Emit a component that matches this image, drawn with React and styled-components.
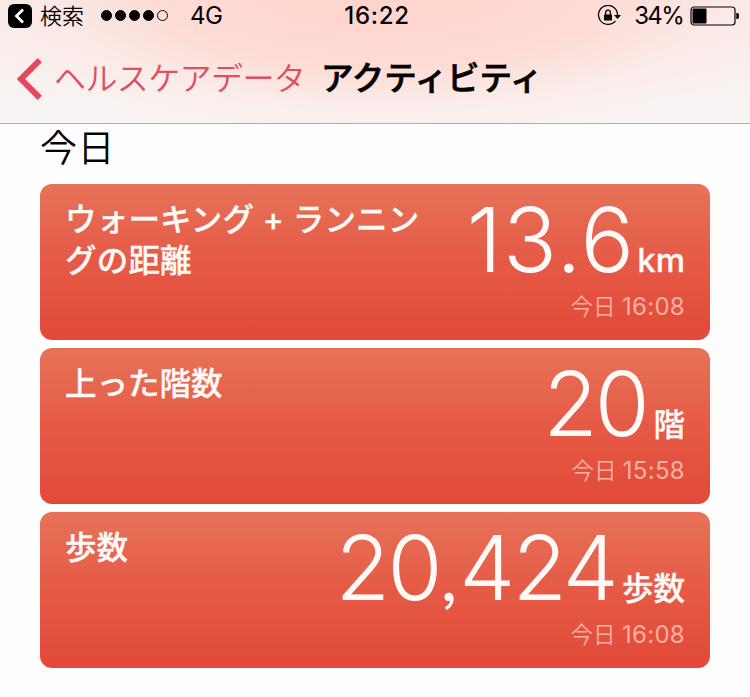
import React from 'react';
import styled, { createGlobalStyle } from 'styled-components';

const GlobalStyle = createGlobalStyle`
  * { box-sizing: border-box; }
  body {
    margin: 0;
    background: #fefefe;
    font-family: Inter, "Noto Sans CJK JP", sans-serif;
    color: #050203;
  }
`;

const Screen = styled.div`
  width: 750px;
  height: 697px;
  overflow: hidden;
  background: #fefefe;
`;

const Header = styled.header`
  height: 124px;
  border-bottom: 1px solid #b4acad;
  background:
    radial-gradient(ellipse 450px 155px at 385px -10px, rgba(255, 213, 205, 1) 15%, rgba(254, 217, 210, 0.85) 50%, rgba(252, 230, 226, 0.45) 76%, rgba(249, 245, 244, 0) 100%),
    linear-gradient(#faeae7, #f8f4f3 85%);
`;

const StatusBar = styled.div`
  display: grid;
  grid-template-columns: 1fr auto 1fr;
  align-items: center;
  height: 31px;
  padding: 0 10px 0 8px;
`;

const StatusGroup = styled.div`
  display: flex;
  align-items: center;
  justify-content: ${(p) => (p.$end ? 'flex-end' : 'flex-start')};
`;

const AppBack = styled.span`
  width: 24px;
  height: 24px;
  display: flex;
  border-radius: 6px;
  background: #000;
`;

const StatusText = styled.span`
  font-size: ${(p) => p.$size || 24}px;
  font-weight: ${(p) => p.$weight || 400};
  letter-spacing: ${(p) => p.$track || 0}px;
  margin-left: ${(p) => p.$left || 0}px;
  line-height: 30px;
  white-space: nowrap;
`;

const Signal = styled.span`
  display: flex;
  gap: 3px;
  margin-left: 17px;
`;

const Dot = styled.i`
  width: 11px;
  height: 11px;
  border-radius: 50%;
  border: 1px solid #000;
  background: ${(p) => (p.$on ? '#000' : 'transparent')};
`;

const LockIcon = styled.svg`
  width: 24px;
  height: 22px;
  margin-right: 13px;
`;

const Battery = styled.svg`
  width: 50px;
  height: 20px;
  margin-left: 7px;
`;

const NavBar = styled.nav`
  display: flex;
  align-items: center;
  height: 92px;
  padding: 3px 0 0 17px;
`;

const Chevron = styled.svg`
  width: 26px;
  height: 42px;
`;

const BackLabel = styled.span`
  margin-left: 11px;
  width: 267px;
  color: #dc5060;
  font-size: 32px;
  font-weight: 350;
  letter-spacing: -0.6px;
  line-height: 44px;
  white-space: nowrap;
`;

const NavTitle = styled.h1`
  margin: 0;
  font-size: 32.5px;
  font-weight: 500;
  -webkit-text-stroke: 0.7px currentColor;
  letter-spacing: -0.1px;
  line-height: 44px;
  white-space: nowrap;
`;

const Content = styled.main`
  padding: 0 40px;
`;

const DayHeading = styled.h2`
  height: 60px;
  margin: 0;
  font-size: 37px;
  font-weight: 350;
  letter-spacing: 0.5px;
  line-height: 50px;
`;

const CardList = styled.div`
  display: grid;
  gap: 8px;
`;

const Card = styled.section`
  display: flex;
  justify-content: space-between;
  height: 156px;
  padding: 0 25px;
  border-radius: 12px;
  background: linear-gradient(#e77259, #e55a46 50%, #e24938);
  color: #fffaf8;
`;

const CardTitle = styled.h3`
  margin: 15px 0 0;
  font-size: 31.5px;
  font-weight: 500;
  -webkit-text-stroke: 0.3px currentColor;
  line-height: 41px;
  letter-spacing: ${(p) => p.$track || 0}px;
  white-space: pre;
`;

const Reading = styled.div`
  display: flex;
  flex-direction: column;
  align-items: flex-end;
  white-space: nowrap;
`;

const Measure = styled.div`
  display: flex;
  align-items: baseline;
  height: 106px;
  line-height: 112px;
`;

const Value = styled.span`
  font-size: 89px;
  font-weight: 300;
  font-feature-settings: "ss03";
  letter-spacing: ${(p) => p.$track || 0}px;
`;

const Comma = styled.span`
  font-size: 64px;
  font-weight: 400;
  margin-right: 4px;
`;

const Unit = styled.span`
  margin-left: ${(p) => p.$left}px;
  font-size: ${(p) => p.$size || 31.5}px;
  font-weight: 500;
  -webkit-text-stroke: 0.3px currentColor;
`;

const Stamp = styled.time`
  color: #f8b09e;
  font-size: 22.5px;
  font-weight: 350;
  line-height: 33px;
`;

const Clock = styled.span`
  font-size: 24px;
  font-weight: 400;
  letter-spacing: 0.3px;
`;

const cards = [
  { title: 'ウォーキング + ランニン\nグの距離', value: '13.6', unit: 'km', time: '16:08', unitSize: 33, titleTrack: 0.2, track: 1.3, unitLeft: 2 },
  { title: '上った階数', value: '20', unit: '階', time: '15:58', track: -3.2, unitLeft: 7 },
  { title: '歩数', value: '20,424', unit: '歩数', time: '16:08', track: -2.8, unitLeft: 6 },
];

function HealthCard({ title, value, unit, time, unitSize, titleTrack, track, unitLeft }) {
  const groups = value.split(',');
  return (
    <Card>
      <CardTitle $track={titleTrack}>{title}</CardTitle>
      <Reading>
        <Measure>
          <Value $track={track}>
            {groups.map((g, i) => (
              <React.Fragment key={i}>
                {i > 0 && <Comma>,</Comma>}
                {g}
              </React.Fragment>
            ))}
          </Value>
          <Unit $size={unitSize} $left={unitLeft}>{unit}</Unit>
        </Measure>
        <Stamp>今日 <Clock>{time}</Clock></Stamp>
      </Reading>
    </Card>
  );
}

export default function App() {
  return (
    <Screen>
      <GlobalStyle />
      <Header>
        <StatusBar>
          <StatusGroup>
            <AppBack>
              <svg width="24" height="24" viewBox="0 0 24 24" fill="none">
                <path d="M15 5.5 8.5 12l6.5 6.5" stroke="#fff" strokeWidth="2.8" />
              </svg>
            </AppBack>
            <StatusText $size={22} $weight={350} $left={8}>検索</StatusText>
            <Signal>
              {[1, 1, 1, 1, 0].map((on, i) => <Dot key={i} $on={on} />)}
            </Signal>
            <StatusText $left={22} $track={-0.5}>4G</StatusText>
          </StatusGroup>
          <StatusText $weight={500} $track={0.7} $left={6}>16:22</StatusText>
          <StatusGroup $end>
            <LockIcon viewBox="0 0 24 22" fill="none">
              <path d="M18.4 15.9A9.5 9.5 0 1 1 20.5 10v2" stroke="#050203" strokeWidth="1.3" />
              <path d="M17 10h7l-3.5 4z" fill="#050203" />
              <rect x="7" y="9.5" width="8" height="6" rx=".5" fill="#050203" />
              <path d="M8.7 10V7.5a2.3 2.3 0 0 1 4.6 0V10" stroke="#050203" strokeWidth="1.3" />
            </LockIcon>
            <StatusText $track={-1.7}>34%</StatusText>
            <Battery viewBox="0 0 50 20">
              <rect x="1" y="1" width="44" height="18" rx="3" fill="none" stroke="#050203" strokeWidth="1.2" />
              <rect x="2.5" y="2.5" width="14" height="15" rx="1" fill="#000" />
              <path d="M46.3 7h1a1.7 3 0 0 1 0 6h-1z" fill="#000" />
            </Battery>
          </StatusGroup>
        </StatusBar>
        <NavBar>
          <Chevron viewBox="0 0 26 42" fill="none">
            <path d="M22.8 2.2 4 21 22.8 39.8" stroke="#e24860" strokeWidth="6" />
          </Chevron>
          <BackLabel>ヘルスケアデータ</BackLabel>
          <NavTitle>アクティビティ</NavTitle>
        </NavBar>
      </Header>
      <Content>
        <DayHeading>今日</DayHeading>
        <CardList>
          {cards.map((c) => <HealthCard key={c.title} {...c} />)}
        </CardList>
      </Content>
    </Screen>
  );
}
